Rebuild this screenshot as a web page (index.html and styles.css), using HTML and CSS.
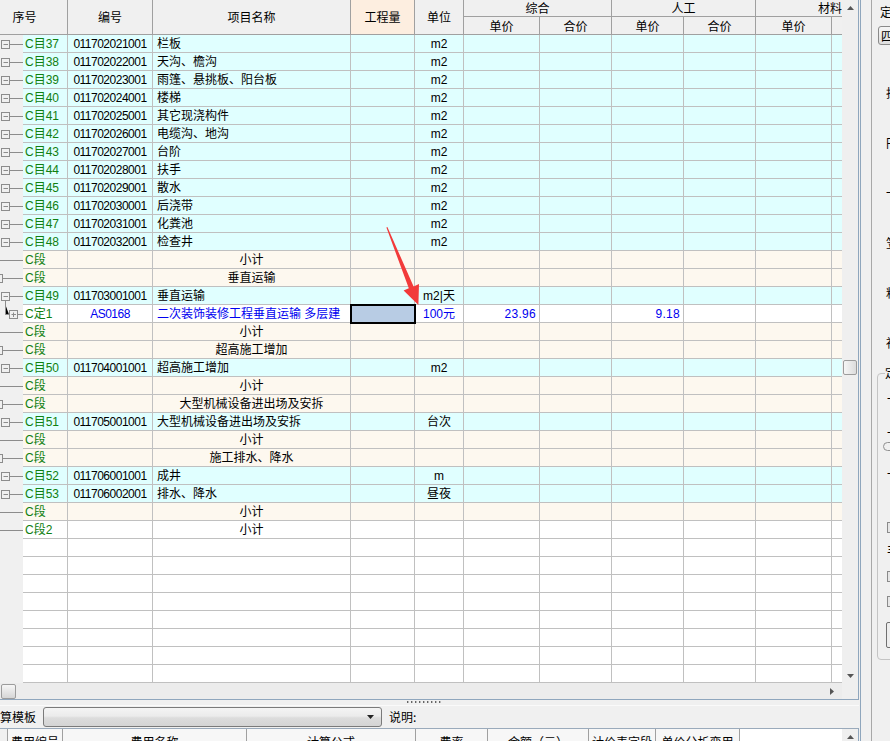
FILE: index.html
```html
<!DOCTYPE html>
<html lang="zh">
<head>
<meta charset="utf-8">
<title>分部分项</title>
<link rel="stylesheet" href="styles.css">
</head>
<body>
<svg class="defs" width="0" height="0">
  <defs>
    <symbol id="tm" viewBox="0 0 23 18"><rect x="1.5" y="5.5" width="8" height="8" fill="none" stroke="#8c8c8c"/><path d="M3.5 9.5H8M10 9.5H23" stroke="#8c8c8c"/></symbol>
    <symbol id="tm2" viewBox="0 0 23 18"><rect x="1.5" y="5.5" width="8" height="8" fill="none" stroke="#8c8c8c"/><path d="M3.5 9.5H8M10 9.5H23M5.5 14V18" stroke="#8c8c8c"/></symbol>
    <symbol id="tl" viewBox="0 0 23 18"><path d="M0 9.5H23" stroke="#8c8c8c"/></symbol>
    <symbol id="tb" viewBox="0 0 23 18"><rect x="-5.5" y="5.5" width="8" height="8" fill="none" stroke="#8c8c8c"/><path d="M3 9.5H23" stroke="#8c8c8c"/></symbol>
    <symbol id="td" viewBox="0 0 23 18"><path d="M5.5 0V9.5H9M18 9.5H23" stroke="#8c8c8c"/><rect x="9.5" y="5.5" width="8" height="8" fill="none" stroke="#8c8c8c"/><path d="M11.5 9.5H16M13.5 7.5V12" stroke="#8c8c8c"/></symbol>
  </defs>
</svg>
<div class="main">
  <div class="gp">
    <div class="gtop">
      <div class="grid">
        <div class="hdr">
          <div class="h h-xh">序号</div>
          <div class="h h-span">编号</div>
          <div class="h h-span">项目名称</div>
          <div class="h h-span h-qty">工程量</div>
          <div class="h h-span">单位</div>
          <div class="h h-grp g1">综合</div>
          <div class="h h-grp g2">人工</div>
          <div class="h h-grp g3">材料</div>
          <div class="h h-sub">单价</div>
          <div class="h h-sub">合价</div>
          <div class="h h-sub">单价</div>
          <div class="h h-sub">合价</div>
          <div class="h h-sub">单价</div>
          <div class="h h-sub h-last"></div>
        </div>

        <div class="r mu"><div class="t"><svg class="tr"><use href="#tm"/></svg><span class="lbl">C目37</span></div><div class="c code">011702021001</div><div class="c nm">栏板</div><div class="c"></div><div class="c u">m2</div><div class="c"></div><div class="c"></div><div class="c"></div><div class="c"></div><div class="c"></div><div class="c e"></div></div>
        <div class="r mu"><div class="t"><svg class="tr"><use href="#tm"/></svg><span class="lbl">C目38</span></div><div class="c code">011702022001</div><div class="c nm">天沟、檐沟</div><div class="c"></div><div class="c u">m2</div><div class="c"></div><div class="c"></div><div class="c"></div><div class="c"></div><div class="c"></div><div class="c e"></div></div>
        <div class="r mu"><div class="t"><svg class="tr"><use href="#tm"/></svg><span class="lbl">C目39</span></div><div class="c code">011702023001</div><div class="c nm">雨篷、悬挑板、阳台板</div><div class="c"></div><div class="c u">m2</div><div class="c"></div><div class="c"></div><div class="c"></div><div class="c"></div><div class="c"></div><div class="c e"></div></div>
        <div class="r mu"><div class="t"><svg class="tr"><use href="#tm"/></svg><span class="lbl">C目40</span></div><div class="c code">011702024001</div><div class="c nm">楼梯</div><div class="c"></div><div class="c u">m2</div><div class="c"></div><div class="c"></div><div class="c"></div><div class="c"></div><div class="c"></div><div class="c e"></div></div>
        <div class="r mu"><div class="t"><svg class="tr"><use href="#tm"/></svg><span class="lbl">C目41</span></div><div class="c code">011702025001</div><div class="c nm">其它现浇构件</div><div class="c"></div><div class="c u">m2</div><div class="c"></div><div class="c"></div><div class="c"></div><div class="c"></div><div class="c"></div><div class="c e"></div></div>
        <div class="r mu"><div class="t"><svg class="tr"><use href="#tm"/></svg><span class="lbl">C目42</span></div><div class="c code">011702026001</div><div class="c nm">电缆沟、地沟</div><div class="c"></div><div class="c u">m2</div><div class="c"></div><div class="c"></div><div class="c"></div><div class="c"></div><div class="c"></div><div class="c e"></div></div>
        <div class="r mu"><div class="t"><svg class="tr"><use href="#tm"/></svg><span class="lbl">C目43</span></div><div class="c code">011702027001</div><div class="c nm">台阶</div><div class="c"></div><div class="c u">m2</div><div class="c"></div><div class="c"></div><div class="c"></div><div class="c"></div><div class="c"></div><div class="c e"></div></div>
        <div class="r mu"><div class="t"><svg class="tr"><use href="#tm"/></svg><span class="lbl">C目44</span></div><div class="c code">011702028001</div><div class="c nm">扶手</div><div class="c"></div><div class="c u">m2</div><div class="c"></div><div class="c"></div><div class="c"></div><div class="c"></div><div class="c"></div><div class="c e"></div></div>
        <div class="r mu"><div class="t"><svg class="tr"><use href="#tm"/></svg><span class="lbl">C目45</span></div><div class="c code">011702029001</div><div class="c nm">散水</div><div class="c"></div><div class="c u">m2</div><div class="c"></div><div class="c"></div><div class="c"></div><div class="c"></div><div class="c"></div><div class="c e"></div></div>
        <div class="r mu"><div class="t"><svg class="tr"><use href="#tm"/></svg><span class="lbl">C目46</span></div><div class="c code">011702030001</div><div class="c nm">后浇带</div><div class="c"></div><div class="c u">m2</div><div class="c"></div><div class="c"></div><div class="c"></div><div class="c"></div><div class="c"></div><div class="c e"></div></div>
        <div class="r mu"><div class="t"><svg class="tr"><use href="#tm"/></svg><span class="lbl">C目47</span></div><div class="c code">011702031001</div><div class="c nm">化粪池</div><div class="c"></div><div class="c u">m2</div><div class="c"></div><div class="c"></div><div class="c"></div><div class="c"></div><div class="c"></div><div class="c e"></div></div>
        <div class="r mu"><div class="t"><svg class="tr"><use href="#tm"/></svg><span class="lbl">C目48</span></div><div class="c code">011702032001</div><div class="c nm">检查井</div><div class="c"></div><div class="c u">m2</div><div class="c"></div><div class="c"></div><div class="c"></div><div class="c"></div><div class="c"></div><div class="c e"></div></div>
        <div class="r dd"><div class="t"><svg class="tr"><use href="#tl"/></svg><span class="lbl">C段</span></div><div class="c"></div><div class="c ctr">小计</div><div class="c"></div><div class="c"></div><div class="c"></div><div class="c"></div><div class="c"></div><div class="c"></div><div class="c"></div><div class="c e"></div></div>
        <div class="r dd"><div class="t"><svg class="tr"><use href="#tb"/></svg><span class="lbl">C段</span></div><div class="c"></div><div class="c ctr">垂直运输</div><div class="c"></div><div class="c"></div><div class="c"></div><div class="c"></div><div class="c"></div><div class="c"></div><div class="c"></div><div class="c e"></div></div>
        <div class="r mu"><div class="t"><svg class="tr"><use href="#tm2"/></svg><span class="lbl">C目49</span></div><div class="c code">011703001001</div><div class="c nm">垂直运输</div><div class="c"></div><div class="c u">m2|天</div><div class="c"></div><div class="c"></div><div class="c"></div><div class="c"></div><div class="c"></div><div class="c e"></div></div>
        <div class="r wh blue"><div class="t"><svg class="tr"><use href="#td"/></svg><span class="lbl">C定1</span></div><div class="c code">AS0168</div><div class="c nm">二次装饰装修工程垂直运输 多层建</div><div class="c sel"></div><div class="c u">100元</div><div class="c rt">23.96</div><div class="c"></div><div class="c rt">9.18</div><div class="c"></div><div class="c"></div><div class="c e"></div></div>
        <div class="r dd"><div class="t"><svg class="tr"><use href="#tl"/></svg><span class="lbl">C段</span></div><div class="c"></div><div class="c ctr">小计</div><div class="c"></div><div class="c"></div><div class="c"></div><div class="c"></div><div class="c"></div><div class="c"></div><div class="c"></div><div class="c e"></div></div>
        <div class="r dd"><div class="t"><svg class="tr"><use href="#tb"/></svg><span class="lbl">C段</span></div><div class="c"></div><div class="c ctr">超高施工增加</div><div class="c"></div><div class="c"></div><div class="c"></div><div class="c"></div><div class="c"></div><div class="c"></div><div class="c"></div><div class="c e"></div></div>
        <div class="r mu"><div class="t"><svg class="tr"><use href="#tm"/></svg><span class="lbl">C目50</span></div><div class="c code">011704001001</div><div class="c nm">超高施工增加</div><div class="c"></div><div class="c u">m2</div><div class="c"></div><div class="c"></div><div class="c"></div><div class="c"></div><div class="c"></div><div class="c e"></div></div>
        <div class="r dd"><div class="t"><svg class="tr"><use href="#tl"/></svg><span class="lbl">C段</span></div><div class="c"></div><div class="c ctr">小计</div><div class="c"></div><div class="c"></div><div class="c"></div><div class="c"></div><div class="c"></div><div class="c"></div><div class="c"></div><div class="c e"></div></div>
        <div class="r dd"><div class="t"><svg class="tr"><use href="#tb"/></svg><span class="lbl">C段</span></div><div class="c"></div><div class="c ctr">大型机械设备进出场及安拆</div><div class="c"></div><div class="c"></div><div class="c"></div><div class="c"></div><div class="c"></div><div class="c"></div><div class="c"></div><div class="c e"></div></div>
        <div class="r mu"><div class="t"><svg class="tr"><use href="#tm"/></svg><span class="lbl">C目51</span></div><div class="c code">011705001001</div><div class="c nm">大型机械设备进出场及安拆</div><div class="c"></div><div class="c u">台次</div><div class="c"></div><div class="c"></div><div class="c"></div><div class="c"></div><div class="c"></div><div class="c e"></div></div>
        <div class="r dd"><div class="t"><svg class="tr"><use href="#tl"/></svg><span class="lbl">C段</span></div><div class="c"></div><div class="c ctr">小计</div><div class="c"></div><div class="c"></div><div class="c"></div><div class="c"></div><div class="c"></div><div class="c"></div><div class="c"></div><div class="c e"></div></div>
        <div class="r dd"><div class="t"><svg class="tr"><use href="#tb"/></svg><span class="lbl">C段</span></div><div class="c"></div><div class="c ctr">施工排水、降水</div><div class="c"></div><div class="c"></div><div class="c"></div><div class="c"></div><div class="c"></div><div class="c"></div><div class="c"></div><div class="c e"></div></div>
        <div class="r mu"><div class="t"><svg class="tr"><use href="#tm"/></svg><span class="lbl">C目52</span></div><div class="c code">011706001001</div><div class="c nm">成井</div><div class="c"></div><div class="c u">m</div><div class="c"></div><div class="c"></div><div class="c"></div><div class="c"></div><div class="c"></div><div class="c e"></div></div>
        <div class="r mu"><div class="t"><svg class="tr"><use href="#tm"/></svg><span class="lbl">C目53</span></div><div class="c code">011706002001</div><div class="c nm">排水、降水</div><div class="c"></div><div class="c u">昼夜</div><div class="c"></div><div class="c"></div><div class="c"></div><div class="c"></div><div class="c"></div><div class="c e"></div></div>
        <div class="r dd"><div class="t"><svg class="tr"><use href="#tl"/></svg><span class="lbl">C段</span></div><div class="c"></div><div class="c ctr">小计</div><div class="c"></div><div class="c"></div><div class="c"></div><div class="c"></div><div class="c"></div><div class="c"></div><div class="c"></div><div class="c e"></div></div>
        <div class="r wh"><div class="t"><svg class="tr"><use href="#tl"/></svg><span class="lbl">C段2</span></div><div class="c"></div><div class="c ctr">小计</div><div class="c"></div><div class="c"></div><div class="c"></div><div class="c"></div><div class="c"></div><div class="c"></div><div class="c"></div><div class="c e"></div></div>

        <div class="r wh"><div class="t"><svg class="tr"></svg><span class="lbl"></span></div><div class="c"></div><div class="c"></div><div class="c"></div><div class="c"></div><div class="c"></div><div class="c"></div><div class="c"></div><div class="c"></div><div class="c"></div><div class="c e"></div></div>
        <div class="r wh"><div class="t"><svg class="tr"></svg><span class="lbl"></span></div><div class="c"></div><div class="c"></div><div class="c"></div><div class="c"></div><div class="c"></div><div class="c"></div><div class="c"></div><div class="c"></div><div class="c"></div><div class="c e"></div></div>
        <div class="r wh"><div class="t"><svg class="tr"></svg><span class="lbl"></span></div><div class="c"></div><div class="c"></div><div class="c"></div><div class="c"></div><div class="c"></div><div class="c"></div><div class="c"></div><div class="c"></div><div class="c"></div><div class="c e"></div></div>
        <div class="r wh"><div class="t"><svg class="tr"></svg><span class="lbl"></span></div><div class="c"></div><div class="c"></div><div class="c"></div><div class="c"></div><div class="c"></div><div class="c"></div><div class="c"></div><div class="c"></div><div class="c"></div><div class="c e"></div></div>
        <div class="r wh"><div class="t"><svg class="tr"></svg><span class="lbl"></span></div><div class="c"></div><div class="c"></div><div class="c"></div><div class="c"></div><div class="c"></div><div class="c"></div><div class="c"></div><div class="c"></div><div class="c"></div><div class="c e"></div></div>
        <div class="r wh"><div class="t"><svg class="tr"></svg><span class="lbl"></span></div><div class="c"></div><div class="c"></div><div class="c"></div><div class="c"></div><div class="c"></div><div class="c"></div><div class="c"></div><div class="c"></div><div class="c"></div><div class="c e"></div></div>
        <div class="r wh"><div class="t"><svg class="tr"></svg><span class="lbl"></span></div><div class="c"></div><div class="c"></div><div class="c"></div><div class="c"></div><div class="c"></div><div class="c"></div><div class="c"></div><div class="c"></div><div class="c"></div><div class="c e"></div></div>
        <div class="r wh"><div class="t"><svg class="tr"></svg><span class="lbl"></span></div><div class="c"></div><div class="c"></div><div class="c"></div><div class="c"></div><div class="c"></div><div class="c"></div><div class="c"></div><div class="c"></div><div class="c"></div><div class="c e"></div></div>

        <svg class="arrow" width="842" height="683" viewBox="0 0 842 683">
          <polygon points="387.4,227 413.6,286.4 419,284 418.4,305 403.6,290.6 408.8,288.3 386.4,227.6" fill="#f23a3a"/>
        </svg>
      </div>
      <div class="vs">
        <div class="sb-btn"><svg width="16" height="16" viewBox="0 0 16 16"><path d="M5 10H12L8.5 6Z" fill="#555"/></svg></div>
        <div class="vs-track"><div class="vs-thumb"></div></div>
        <div class="sb-btn"><svg width="16" height="16" viewBox="0 0 16 16"><path d="M5 7H12L8.5 11Z" fill="#555"/></svg></div>
      </div>
    </div>
    <div class="hs-row">
      <div class="hs">
        <div class="hs-thumb"></div>
        <div class="hs-btn"><svg width="16" height="16" viewBox="0 0 16 16"><path d="M7 5V12L11 8.5Z" fill="#555"/></svg></div>
      </div>
      <div class="corner"></div>
    </div>
  </div>
  <div class="splitter"><div class="grip"></div></div>
  <div class="bp">
    <div class="bp-row">
      <span class="bp-lbl">算模板</span>
      <div class="combo"><svg width="10" height="6" viewBox="0 0 10 6"><path d="M1 1H8L4.5 5Z" fill="#222"/></svg></div>
      <span class="bp-note">说明:</span>
    </div>
    <div class="bt">
      <div class="bt-c bt-0"></div>
      <div class="bt-c w1">费用编号</div>
      <div class="bt-c w2">费用名称</div>
      <div class="bt-c w3">计算公式</div>
      <div class="bt-c w4">费率</div>
      <div class="bt-c w5">金额（元）</div>
      <div class="bt-c w6">计价表字段</div>
      <div class="bt-c w7">单价分析变用</div>
      <div class="bt-fill"></div>
      <div class="bt-sb"><svg width="16" height="16" viewBox="0 0 16 16"><path d="M5 10H12L8.5 6Z" fill="#555"/></svg></div>
    </div>
  </div>
</div>
<div class="rp">
  <div class="rpi">
    <div class="rp-t1">定</div>
    <div class="rp-box">四</div>
    <div class="rp-ch first">担</div>
    <div class="rp-ch">円</div>
    <div class="rp-ch">一</div>
    <div class="rp-ch">笠</div>
    <div class="rp-ch">粘</div>
    <div class="rp-ch">社</div>
    <div class="rp-grp">
      <span class="rp-gt">定</span>
      <div class="rp-ch2 a">一</div>
      <div class="rp-ch2 b">一</div>
      <div class="rp-radio"></div>
      <div class="rp-ch2 d">一</div>
      <div class="rp-ck c1"></div>
      <div class="rp-ch2 f">丰</div>
      <div class="rp-ck c2"></div>
      <div class="rp-ck c3"></div>
      <div class="rp-btn"></div>
    </div>
  </div>
</div>
</body>
</html>
```

FILE: styles.css
```css
* { box-sizing: border-box; }
html, body { margin: 0; padding: 0; }
body {
  width: 890px; height: 741px; overflow: hidden;
  background: #f0f0f0;
  font-family: "Liberation Sans", "Noto Sans CJK SC", sans-serif;
  font-size: 12px; color: #000;
  display: flex;
  --cols: 68px 85px 198px 64px 49px 76px 72px 72px 72px 76px 10px;
}
.defs { position: absolute; width: 0; height: 0; }

.main { width: 859px; flex: none; display: flex; flex-direction: column; }
.gp { height: 700px; flex: none; border-right: 1px solid #8fa6bd; border-bottom: 1px solid #8fa6bd; display: flex; flex-direction: column; }
.gtop { height: 683px; flex: none; display: flex; }
.grid { width: 842px; flex: none; position: relative; background: #fff; overflow: hidden; }

.hdr {
  display: grid; grid-template-columns: var(--cols); grid-template-rows: 17px 17px;
  height: 35px; background: #f0f0f0; border-bottom: 1px solid #a0a0a0;
  font-family: "Noto Sans CJK SC", sans-serif;
}
.h { display: flex; align-items: center; justify-content: center; border-right: 1px solid #a0a0a0; white-space: nowrap; overflow: hidden; line-height: 16px; }
.h-xh { grid-row: 1 / 3; padding-right: 18px; }
.h-span { grid-row: 1 / 3; }
.h-qty { background: #fdeee0; }
.h-grp { border-bottom: 1px solid #a0a0a0; }
.g1 { grid-column: 6 / 8; }
.g2 { grid-column: 8 / 10; }
.g3 { grid-column: 10 / 12; justify-content: flex-end; border-right: 0; }
.h-last { border-right: 0; }

.r { display: grid; grid-template-columns: var(--cols); height: 18px; }
.mu { background: #e0ffff; }
.dd { background: #fdf8ef; }
.wh { background: #fff; }
.t { display: flex; }
.tr { width: 23px; height: 18px; flex: none; background: #f0f0f0; }
.lbl { flex: 1; color: #108010; padding: 1px 0 0 2px; line-height: 16px; border-right: 1px solid #c0c0c0; border-bottom: 1px solid #c0c0c0; white-space: nowrap; overflow: hidden; }
.c { border-right: 1px solid #c0c0c0; border-bottom: 1px solid #c0c0c0; white-space: nowrap; overflow: hidden; line-height: 16px; padding: 1px 3px 0; }
.c.e { border-right: 0; }
.code { text-align: center; letter-spacing: -0.5px; }
.nm { padding-left: 4px; }
.ctr { text-align: center; }
.u { text-align: center; }
.rt { text-align: right; padding-right: 3px; letter-spacing: 0.3px; }
.blue .c { color: #0000f0; }
.sel { background: #b8cce4; outline: 2px solid #000; outline-offset: -1px; position: relative; z-index: 1; }

.arrow { position: absolute; left: 0; top: 0; pointer-events: none; z-index: 2; }

.vs { width: 16px; flex: none; display: flex; flex-direction: column; background: #efefef; }
.sb-btn { height: 16px; flex: none; }
.sb-btn svg { display: block; }
.vs-track { flex: 1; }
.vs-thumb { margin-top: 344px; margin-left: 1px; width: 14px; height: 15px; border: 1px solid #9c9c9c; border-radius: 2px; background: linear-gradient(to right, #f6f6f6, #dcdcdc); }

.hs-row { height: 16px; flex: none; display: flex; }
.hs { width: 842px; flex: none; display: flex; align-items: center; background: #ececec; padding-left: 1px; }
.hs-thumb { width: 15px; height: 15px; border: 1px solid #9c9c9c; border-radius: 2px; background: linear-gradient(#f6f6f6, #d6d6d6); }
.hs-btn { margin-left: auto; width: 16px; height: 16px; margin-right: 1px; }
.hs-btn svg { display: block; transform: translateX(-2px); }
.corner { flex: 1; background: #efefef; }

.splitter { height: 5px; flex: none; display: flex; justify-content: center; }
.grip { margin-left: -12px; margin-top: 1px; width: 34px; height: 2px; background: repeating-linear-gradient(to right, #666 0 1px, #bbb 1px 2px, transparent 2px 4px); }

.bp { height: 36px; flex: none; border-top: 1px solid #fafafa; display: flex; flex-direction: column; font-family: "Noto Sans CJK SC", sans-serif; }
.bp-row { height: 22px; flex: none; display: flex; align-items: center; }
.bp-lbl { width: 43px; line-height: 16px; }
.combo { width: 339px; height: 20px; border: 1px solid #7a7a7a; border-radius: 3px; background: linear-gradient(#f4f4f4 0%, #ebebeb 45%, #dcdcdc 55%, #d4d4d4 100%); display: flex; align-items: center; justify-content: flex-end; padding-right: 5px; }
.combo svg { display: block; }
.bp-note { margin-left: 7px; line-height: 16px; }
.bt { flex: 1; display: flex; border-top: 1px solid #9aaabb; border-right: 1px solid #8fa6bd; overflow: hidden; }
.bt-c { flex: none; height: 22px; padding-top: 5px; border-right: 1px solid #a0a0a0; display: flex; align-items: flex-start; justify-content: center; white-space: nowrap; background: #f7f7f7; line-height: 16px; }
.bt-0 { width: 8px; background: #f0f0f0; }
.w1 { width: 55px; }
.w2 { width: 184px; }
.w3 { width: 169px; }
.w4 { width: 72px; }
.w5 { width: 101px; }
.w6 { width: 67px; }
.w7 { width: 84px; }
.bt-fill { flex: 1; background: #fff; }
.bt-sb { width: 16px; flex: none; background: #efefef; }
.bt-sb svg { display: block; }

.rp { width: 30px; flex: none; margin-left: 1px; border-left: 1px solid #8fa6bd; display: flex; }
.rpi { flex: 1; margin-left: 10px; border-left: 1px solid #a8a8a8; overflow: hidden; font-family: "Noto Sans CJK SC", sans-serif; display: flex; flex-direction: column; }
.rp-t1 { padding-left: 8px; margin-top: 4px; line-height: 16px; white-space: nowrap; }
.rp-box { margin-left: 6px; margin-top: 6px; width: 30px; height: 19px; flex: none; border: 1px solid #8a8a8a; border-radius: 3px; background: linear-gradient(#f6f6f6, #dedede); padding-left: 2px; line-height: 17px; }
.rp-ch { padding-left: 14px; height: 50px; flex: none; line-height: 16px; white-space: nowrap; }
.rp-ch.first { margin-top: 40px; }
.rp-grp { margin-top: -12px; margin-left: 5px; width: 30px; height: 287px; flex: none; border: 1px solid #c4c4c4; border-radius: 4px; position: relative; }
.rp-gt { position: absolute; left: 7px; top: -9px; background: #f0f0f0; line-height: 16px; }
.rp-ch2 { padding-left: 9px; height: 16px; line-height: 16px; }
.rp-ch2.a { margin-top: 17px; }
.rp-ch2.b { margin-top: 18px; }
.rp-radio { margin-top: 1px; margin-left: 5px; width: 12px; height: 9px; border: 1px solid #909090; border-radius: 5px; }
.rp-ch2.d { margin-top: 15px; }
.rp-ck { margin-left: 9px; width: 11px; height: 11px; border: 1px solid #8a8a8a; background: #e6e6e6; }
.rp-ck.c1 { margin-top: 40px; }
.rp-ch2.f { margin-top: 9px; }
.rp-ck.c2 { margin-top: 13px; }
.rp-ck.c3 { margin-top: 14px; }
.rp-btn { margin-top: 15px; margin-left: 8px; width: 20px; height: 26px; border: 1px solid #707070; border-radius: 2px; background: #eee; }
```
